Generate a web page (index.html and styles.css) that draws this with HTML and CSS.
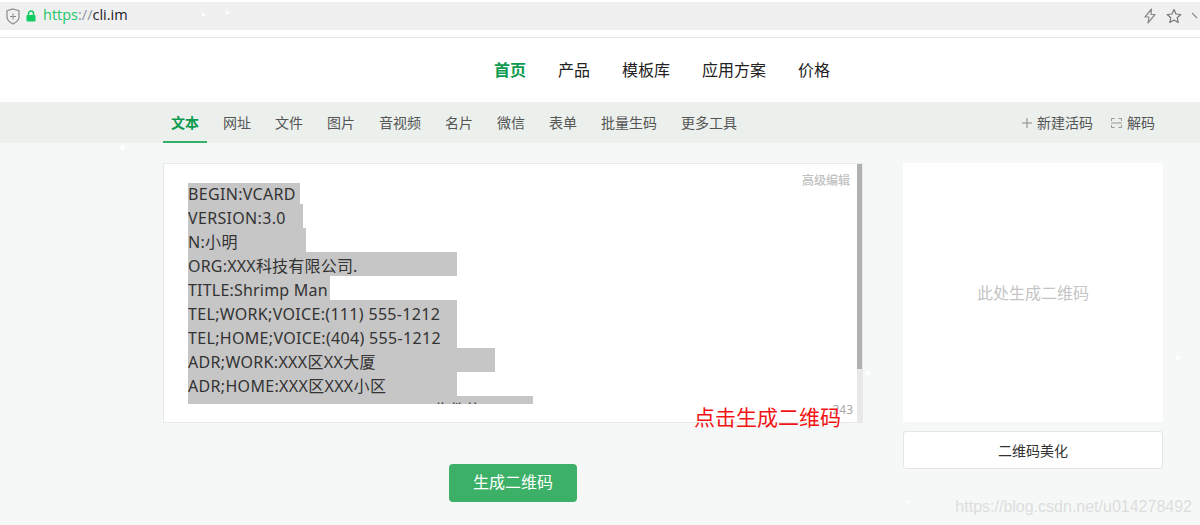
FILE: index.html
```html
<!DOCTYPE html>
<html lang="zh">
<head>
<meta charset="utf-8">
<title>草料二维码</title>
<link rel="stylesheet" href="styles.css">
</head>
<body>
<div class="browser">
  <div class="urlbar">
    <svg class="shield" width="14" height="17" viewBox="0 0 14 17"><path d="M7 1 13 2.800V9c0 3-2.500 5.200-6 7C3.500 14.200 1 12 1 9V2.800Z" fill="none" stroke="#8a8a8a" stroke-width="1.200"/><path d="M7 5.500v6M4 8.500h6" stroke="#8a8a8a" stroke-width="1"/></svg>
    <svg class="lock" width="10" height="12" viewBox="0 0 10 12"><path d="M2.500 5V3.500a2.500 2.500 0 0 1 5 0V5" fill="none" stroke="#12cc62" stroke-width="1.500"/><rect x="0.500" y="5" width="9" height="6.500" rx="1" fill="#12cc62"/></svg>
    <span class="url"><span class="scheme">https</span><span class="sep">://</span>cli.im</span>
    <span class="spacer"></span>
    <svg class="bolt" width="14" height="16" viewBox="0 0 14 16"><path d="M8.500 1 2 9h4l-1 6 7-8.500H8Z" fill="none" stroke="#8a8a8a" stroke-width="1.200" stroke-linejoin="round"/></svg>
    <svg class="star" width="16" height="16" viewBox="0 0 16 16"><path d="M8 1.500 10 6l4.800.5-3.600 3.200 1 4.800L8 12l-4.200 2.500 1-4.800L1.200 6.500 6 6Z" fill="none" stroke="#777" stroke-width="1.200" stroke-linejoin="round"/></svg>
    <svg class="chev" width="8" height="16" viewBox="0 0 8 16"><path d="M0 5l5 5" fill="none" stroke="#888" stroke-width="1.200"/></svg>
  </div>
</div>
<header class="topnav">
  <a class="topitem active">首页</a>
  <a class="topitem">产品</a>
  <a class="topitem">模板库</a>
  <a class="topitem">应用方案</a>
  <a class="topitem">价格</a>
</header>
<nav class="tabs">
  <div class="tabs-inner">
    <a class="tab active">文本</a>
    <a class="tab">网址</a>
    <a class="tab">文件</a>
    <a class="tab">图片</a>
    <a class="tab">音视频</a>
    <a class="tab">名片</a>
    <a class="tab">微信</a>
    <a class="tab">表单</a>
    <a class="tab">批量生码</a>
    <a class="tab">更多工具</a>
    <span class="spacer"></span>
    <a class="tool"><svg width="10" height="10" viewBox="0 0 10 10"><path d="M5 0v10M0 5h10" stroke="#888" stroke-width="1"/></svg>新建活码</a>
    <a class="tool tool-last"><svg width="11" height="10" viewBox="0 0 11 10"><path d="M.5 3V.5h3M7.500.5h3V3M.5 7v2.500h3M7.500 9.500h3V7M0 5h11" fill="none" stroke="#999" stroke-width="1"/></svg>解码</a>
  </div>
</nav>
<main class="content">
  <section class="left">
    <div class="editor">
      <a class="advanced">高级编辑</a>
      <div class="lines">
        <div class="line w112">BEGIN:VCARD</div>
        <div class="line w115">VERSION:3.0</div>
        <div class="line w118">N:小明</div>
        <div class="line w269 org">ORG:XXX科技有限公司.</div>
        <div class="line w142 org">TITLE:Shrimp Man</div>
        <div class="line w269">TEL;WORK;VOICE:(111) 555-1212</div>
        <div class="line w269">TEL;HOME;VOICE:(404) 555-1212</div>
        <div class="line w307">ADR;WORK:XXX区XX大厦</div>
        <div class="line w269">ADR;HOME:XXX区XXX小区</div>
        <div class="line w345">EMAIL:xiaoming@xxxxxxx.com 收件信</div>
      </div>
      <div class="scrollbar"><div class="thumb"></div></div>
      <span class="count">243</span>
    </div>
    <button class="generate">生成二维码</button>
  </section>
  <aside class="right">
    <div class="preview">此处生成二维码</div>
    <button class="beautify">二维码美化</button>
  </aside>
</main>
<div class="note">点击生成二维码</div>
<div class="watermark">https://blog.csdn.net/u014278492</div>
<i class="snow s1"></i><i class="snow s2"></i><i class="snow s3"></i><i class="snow s4"></i><i class="snow s5"></i><i class="snow s6"></i>
</body>
</html>
```
FILE: styles.css
```css
* { box-sizing: border-box; }
html, body { margin: 0; height: 525px; overflow: hidden; }
body {
  position: relative;
  background: #f6f8f7;
  font-family: "Noto Sans", "Noto Sans CJK SC", sans-serif;
  color: #333;
}
a { display: block; }
.spacer { flex: 1; }

.browser { background: #fff; padding-top: 2px; height: 38px; border-bottom: 1px solid #e5e5e5; }
.urlbar { height: 28px; background: #f0f0f0; display: flex; align-items: center; padding-left: 6px; }
.lock { margin-left: 6px; margin-right: 7px; }
.url { font-family: "Open Sans", "Noto Sans", sans-serif; font-size: 14.500px; line-height: 26px; color: #1a1a2a; position: relative; top: -1px; }
.scheme { color: #1cc76a; }
.sep { color: #8a93a0; }
.bolt { margin-right: 9px; }
.star { margin-right: 10px; }
.chev { margin-right: 0; }

.topnav { height: 64px; background: #fff; display: flex; align-items: center; padding-left: 494px; gap: 32px; font-size: 16px; color: #222; }
.topnav .topitem { line-height: 24px; }
.topitem.active { color: #0c9a4f; font-weight: 700; }

.tabs { height: 41px; background: #ecf0ed; padding-left: 163px; }
.tabs-inner { display: flex; height: 41px; width: 992px; font-size: 14px; color: #555; align-items: stretch; gap: 0; }
.tab { padding: 0 8px; margin-right: 8px; line-height: 41px; }
.tab.active { color: #0c9a4f; font-weight: 700; border-bottom: 2px solid #36b066; }
.tool { display: flex; align-items: center; gap: 5px; line-height: 41px; }
.tool-last { margin-left: 18px; }

.content { display: flex; padding: 20px 0 0 163px; gap: 40px; }
.left { width: 700px; display: flex; flex-direction: column; align-items: center; }
.editor { position: relative; width: 700px; height: 260px; background: #fff; border: 1px solid #e7ebe8; padding: 19px 0 0 24px; }
.lines { height: 221px; overflow: hidden; font-size: 16px; color: #333; letter-spacing: .32px; }
.line { background: #c6c6c6; height: 24px; line-height: 28px; white-space: nowrap; }
.line:first-child { margin-top: -3px; }
.org { letter-spacing: .2px; }
.w112 { width: 112px; } .w115 { width: 115px; } .w118 { width: 118px; } .w142 { width: 142px; }
.w269 { width: 269px; } .w307 { width: 307px; } .w345 { width: 345px; }
.advanced { position: absolute; right: 12px; top: 9px; font-size: 12px; line-height: 16px; color: #c0c0c0; font-weight: 500; }
.scrollbar { position: absolute; top: 0; right: 0; width: 5px; height: 258px; background: #e8e8e8; }
.thumb { height: 205px; background: #b0b0b0; }
.count { position: absolute; right: 9px; bottom: 4px; font-size: 12px; line-height: 16px; color: #aaa; }
.generate { margin-top: 41px; width: 128px; height: 38px; border: 0; border-radius: 4px; background: #3cb066; color: #fff; font: inherit; font-size: 16px; line-height: 36px; padding: 0 0 2px; }

.right { width: 260px; }
.preview { height: 259px; background: #fff; display: flex; align-items: center; justify-content: center; font-size: 16px; color: #c4c4c4; padding-bottom: 2px; }
.beautify { display: block; margin-top: 9px; width: 260px; height: 38px; background: #fff; border: 1px solid #e3e6e4; border-radius: 3px; font: inherit; font-size: 14px; color: #333; }

.note { position: absolute; left: 694px; top: 402px; font-size: 21px; line-height: 30px; color: #f21414; white-space: nowrap; }
.watermark { position: absolute; right: 8px; top: 497px; font-family: "Liberation Sans", sans-serif; font-size: 16px; line-height: 20px; color: #dcdedd; white-space: nowrap; }

.snow { position: absolute; display: block; background: #fff; border-radius: 50%; width: 3px; height: 3px; }
.s1 { left: 202px; top: 13px; }
.s2 { left: 226px; top: 11px; }
.s3 { left: 120px; top: 145px; width: 5px; height: 5px; }
.s4 { left: 866px; top: 371px; width: 4px; height: 4px; }
.s5 { left: 1176px; top: 356px; width: 4px; height: 4px; }
.s6 { left: 906px; top: 500px; }
```
